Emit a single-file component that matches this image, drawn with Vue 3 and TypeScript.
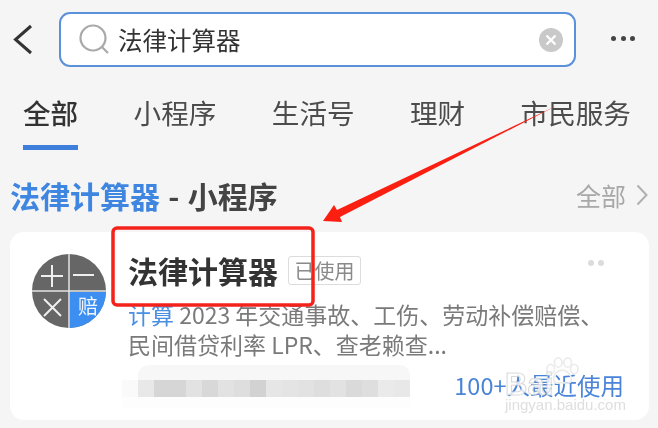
<script setup lang="ts">
const tabs = ["全部", "小程序", "生活号", "理财", "市民服务"];

// grey levels of the mosaic that hides the company name
const mosaic = [250, 232, 214, 214, 226, 216, 226, 222, 210, 230, 228, 226, 222, 226, 218, 222, 234, 232];
const blockColor = (level: number) => `rgb(${level}, ${level}, ${level})`;
</script>

<template>
  <div class="page">
    <header class="top-bar">
      <svg class="back" width="59" height="55" viewBox="0 0 59 55">
        <path d="M31 14 L15.500 27.500 L31 41" fill="none" stroke="#333" stroke-width="3" />
      </svg>
      <div class="search-box">
        <svg class="search-icon" width="36" height="36" viewBox="0 0 36 36">
          <circle cx="15" cy="15" r="12.500" fill="none" stroke="#a9a9a9" stroke-width="2.200" />
          <path d="M24 24 L30 30" stroke="#a9a9a9" stroke-width="2.200" />
        </svg>
        <span class="search-text">法律计算器</span>
        <svg class="clear" width="24" height="24" viewBox="0 0 24 24">
          <circle cx="12" cy="12" r="12" fill="#c9c9c9" />
          <path d="M7.500 7.500 L16.500 16.500 M16.500 7.500 L7.500 16.500" stroke="#fff" stroke-width="2.200" />
        </svg>
      </div>
      <div class="more">
        <i></i><i></i><i></i>
      </div>
    </header>

    <nav class="tabs">
      <span v-for="(tab, i) in tabs" :key="tab" class="tab" :class="{ active: i === 0 }">{{ tab }}</span>
    </nav>

    <div class="section-head">
      <div class="section-title"><em>法律计算器</em> - 小程序</div>
      <div class="section-all">
        全部
        <svg width="12" height="22" viewBox="0 0 12 22">
          <path d="M1.500 1.500 L10.500 11 L1.500 20.500" fill="none" stroke="#b0b0b0" stroke-width="2" />
        </svg>
      </div>
    </div>

    <section class="card">
      <svg class="logo" width="74" height="74" viewBox="0 0 74 74">
        <circle cx="37" cy="37" r="37" fill="#666" />
        <path d="M38 38 H74 A37 37 0 0 1 38 74 Z" fill="#3c8ff0" />
        <path d="M37 0 V74 M0 37 H74" stroke="#e4e4e4" stroke-width="1.500" />
        <path d="M9 22 H31 M20 11 V33 M41 21 H62 M12 45 L29 62 M29 45 L12 62" stroke="#efefef" stroke-width="2" fill="none" />
        <text x="56" y="60" class="logo-text" text-anchor="middle">赔</text>
      </svg>
      <div class="body">
        <div class="title-row">
          <span class="title">法律计算器</span>
          <span class="tag">已使用</span>
          <span class="dots"><i></i><i></i></span>
        </div>
        <p class="desc"><em>计算</em> 2023 年交通事故、工伤、劳动补偿赔偿、<br />民间借贷利率 LPR、查老赖查...</p>
        <div class="foot">
          <div class="mosaic">
            <div class="mosaic-top"></div>
            <div class="mosaic-row">
              <span v-for="(level, i) in mosaic" :key="i" :style="{ background: blockColor(level) }"></span>
            </div>
            <div class="mosaic-bottom"></div>
          </div>
          <span class="users">100+人最近使用</span>
        </div>
      </div>
    </section>

    <!-- annotation drawn on top of the screenshot -->
    <svg class="marks" width="658" height="428" viewBox="0 0 658 428">
      <path d="M556 106 L337 210 L334 205 L323 221 L342 222 L340 217 Z" fill="#fb1f12" />
      <rect x="113" y="228" width="200" height="77" rx="4" fill="none" stroke="#f3231c" stroke-width="3.500" />
    </svg>

    <!-- baidu watermark -->
    <div class="watermark">
      <svg class="paw" width="34" height="30" viewBox="0 0 36 30">
        <g fill="none" stroke="#ececec" stroke-width="1.800">
          <ellipse cx="6" cy="13" rx="4" ry="5" />
          <ellipse cx="14" cy="6" rx="4" ry="5" />
          <ellipse cx="24" cy="6" rx="4" ry="5" />
          <ellipse cx="31" cy="13" rx="4" ry="5" />
          <path d="M18 14 C12 14 9 20 9 24 C9 29 15 28 18 27 C21 28 28 29 28 24 C28 20 24 14 18 14 Z" />
        </g>
      </svg>
      <span class="wm-logo">Bai</span>
      <span class="wm-url">jingyan.baidu.com</span>
    </div>
  </div>
</template>

<style scoped>
.page {
  position: relative;
  width: 658px;
  height: 428px;
  overflow: hidden;
  background: #f5f5f6;
  font-family: "Noto Sans CJK SC", "Noto Sans", sans-serif;
  color: #333;
  filter: blur(0.6px);
}

em {
  font-style: normal;
}

.top-bar {
  display: flex;
  align-items: center;
  height: 55px;
  padding-top: 12px;
}

.back {
  flex: none;
}

.search-box {
  box-sizing: border-box;
  display: flex;
  align-items: center;
  width: 517px;
  height: 55px;
  padding: 0 11px 0 17px;
  background: #fff;
  border: 2px solid #5b90db;
  border-radius: 11px;
}

.search-icon {
  flex: none;
  margin-top: 3px;
}

.search-text {
  flex: 1;
  margin-left: 4px;
  font-size: 24.500px;
  line-height: 34px;
  color: #333;
}

.more {
  display: flex;
  gap: 4.500px;
  margin-left: 35px;
  margin-bottom: 3px;
}

.more i {
  width: 5px;
  height: 5px;
  border-radius: 50%;
  background: #444;
}

.tabs {
  display: flex;
  gap: 55.400px;
  margin-top: 26px;
  padding-left: 23px;
}

.tab {
  padding-bottom: 14px;
  border-bottom: 5px solid transparent;
  font-size: 27.600px;
  line-height: 38px;
  white-space: nowrap;
  color: #4c4c4c;
}

.tab.active {
  border-bottom-color: #3f7fdc;
  font-weight: 500;
  color: #333;
}

.section-head {
  display: flex;
  align-items: center;
  justify-content: space-between;
  height: 38px;
  padding: 26px 10px 18px;
}

.section-title {
  font-size: 30px;
  font-weight: 700;
  line-height: 38px;
  word-spacing: 1.500px;
  color: #444;
}

.section-title em {
  color: #3f86e0;
}

.section-all {
  display: flex;
  align-items: center;
  gap: 10px;
  font-size: 25px;
  color: #a8a8a8;
}

.card {
  box-sizing: border-box;
  display: flex;
  gap: 22px;
  width: 639px;
  height: 188px;
  margin-left: 10px;
  padding: 22px 25px 0 22px;
  background: #fff;
  border-radius: 14px;
}

.logo {
  flex: none;
}

.logo-text {
  font-size: 20px;
  fill: #f2f7ff;
}

.body {
  flex: 1;
  min-width: 0;
}

.title-row {
  display: flex;
  align-items: center;
  height: 32px;
}

.title {
  font-size: 30px;
  font-weight: 700;
  line-height: 32px;
  color: #333;
}

.tag {
  box-sizing: border-box;
  display: flex;
  align-items: center;
  justify-content: center;
  width: 73px;
  height: 29px;
  margin-left: 10px;
  border: 1.500px solid #dcdcdc;
  border-radius: 3px;
  font-size: 20px;
  color: #8a8a8a;
}

.dots {
  display: flex;
  gap: 4px;
  margin-left: auto;
  margin-right: 20px;
  margin-top: -14px;
}

.dots i {
  width: 6px;
  height: 6px;
  border-radius: 50%;
  background: #dcdcdc;
}

.desc {
  margin: 13px 0 0;
  font-size: 23px;
  line-height: 30px;
  white-space: nowrap;
  color: #7a7a7a;
}

.desc em {
  color: #4a8fe2;
}

.foot {
  display: flex;
  justify-content: space-between;
  margin-top: 6px;
  margin-left: -6px;
}

.mosaic {
  width: 288px;
}

.mosaic-top {
  height: 15px;
  margin-left: 16px;
  background: #f7f7f7;
  border-radius: 10px 10px 0 0;
}

.mosaic-row {
  display: flex;
  height: 17px;
}

.mosaic-row span {
  flex: 1;
}

.mosaic-bottom {
  height: 11px;
  background: #fdfdfd;
}

.users {
  margin-top: 3px;
  font-size: 23.500px;
  line-height: 34px;
  white-space: nowrap;
  color: #4a84d8;
}

.marks {
  position: absolute;
  top: 0;
  left: 0;
}

.watermark {
  position: absolute;
  top: 356px;
  left: 505px;
  width: 120px;
  height: 60px;
}

.paw {
  position: absolute;
  top: 0;
  left: 40px;
}

.wm-logo {
  position: absolute;
  top: 12px;
  left: 0;
  font-family: "Liberation Sans", sans-serif;
  font-size: 31px;
  font-weight: 700;
  line-height: 34px;
  color: rgba(255, 255, 255, 0.8);
  -webkit-text-stroke: 1px rgba(190, 190, 190, 0.6);
}

.wm-url {
  position: absolute;
  top: 40px;
  left: 0;
  font-family: "Liberation Sans", sans-serif;
  font-size: 15px;
  line-height: 18px;
  white-space: nowrap;
  color: #dedede;
}
</style>
